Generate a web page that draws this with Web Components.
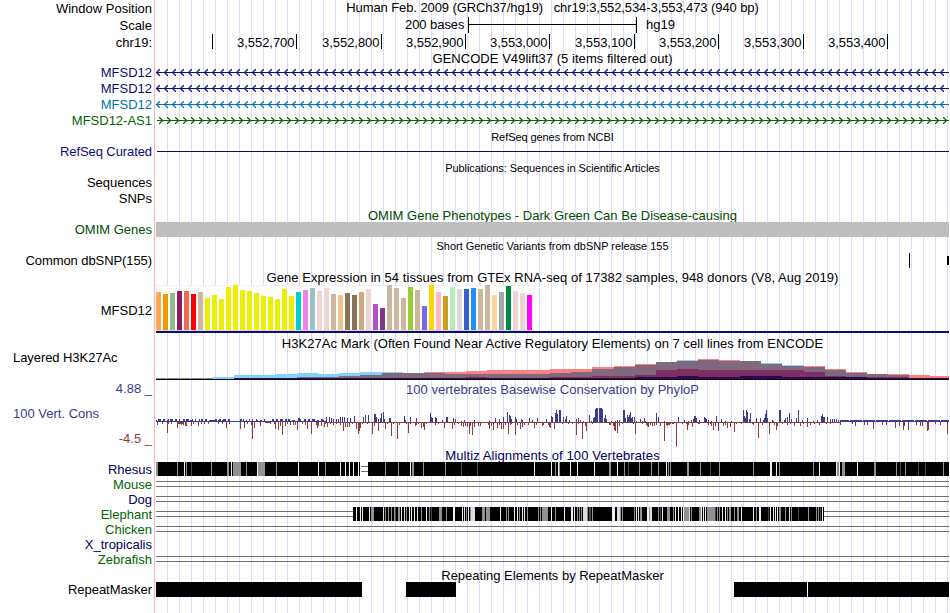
<!DOCTYPE html>
<html lang="en">
<head>
<meta charset="utf-8">
<title>hg19 chr19:3,552,534-3,553,473</title>
<style>
body {
    margin: 0;
    background: #fff;
    overflow: hidden;
}
</style>
</head>
<body>
<genome-browser>
    <track-row height="17" label="Window Position" base="13"><track-title base="12" fit="412.5">Human Feb. 2009 (GRCh37/hg19)&nbsp;&nbsp; chr19:3,552,534-3,553,473 (940 bp)</track-title></track-row>
    <track-row height="17" label="Scale" base="13"><scale-bar></scale-bar></track-row>
    <track-row height="17" label="chr19:" base="13"><position-ruler></position-ruler></track-row>

    <track-row height="13"><track-title base="12" fit="240">GENCODE V49lift37 (5 items filtered out)</track-title></track-row>
    <track-row height="16" label="MFSD12" base="13" color="#0c0c78"><gene-line color="#0c0c78" strand="-"></gene-line></track-row>
    <track-row height="16" label="MFSD12" base="13" color="#0c0c78"><gene-line color="#0c0c78" strand="-"></gene-line></track-row>
    <track-row height="16" label="MFSD12" base="13" color="#0072b2"><gene-line color="#0072b2" strand="-"></gene-line></track-row>
    <track-row height="16" label="MFSD12-AS1" base="13" color="#006400"><gene-line color="#006400" strand="+"></gene-line></track-row>

    <track-row height="16"><track-title small base="13" fit="122.5">RefSeq genes from NCBI</track-title></track-row>
    <track-row height="16" label="RefSeq Curated" fit="92" base="12" color="#0c0c78"><block-track blocks="157,7,792,1,#0c0c50"></block-track></track-row>

    <track-row height="15"><track-title small base="12" fit="214.5">Publications: Sequences in Scientific Articles</track-title></track-row>
    <track-row height="16" label="Sequences" base="12"></track-row>
    <track-row height="16" label="SNPs" base="12"></track-row>

    <track-row height="15"><track-title base="13" fit="369" color="#004b00">OMIM Gene Phenotypes - Dark Green Can Be Disease-causing</track-title></track-row>
    <track-row height="15" label="OMIM Genes" base="12" color="#004b00"><block-track blocks="156,0,793,15,#bebebe"></block-track></track-row>

    <track-row height="15"><track-title small base="13" fit="232">Short Genetic Variants from dbSNP release 155</track-title></track-row>
    <track-row height="17" label="Common dbSNP(155)" fit="126.5" base="13"><block-track blocks="909,1,1,15,#000 947,4,2,9,#000"></block-track></track-row>

    <track-row height="16"><track-title base="13" fit="572">Gene Expression in 54 tissues from GTEx RNA-seq of 17382 samples, 948 donors (V8, Aug 2019)</track-title></track-row>
    <track-row height="51" label="MFSD12" base="30"><tissue-chart></tissue-chart></track-row>

    <track-row height="15"><track-title base="12" fit="541.5">H3K27Ac Mark (Often Found Near Active Regulatory Elements) on 7 cell lines from ENCODE</track-title></track-row>
    <track-row height="30" label="Layered H3K27Ac" fit="104.5" base="11" side="left"><histone-chart></histone-chart></track-row>

    <conservation-row></conservation-row>

    <track-row height="13"><track-title base="11" fit="214.5" color="#00005a">Multiz Alignments of 100 Vertebrates</track-title></track-row>
    <track-row height="15" label="Rhesus" base="12" color="#00005a"><align-strip species="rhesus"></align-strip></track-row>
    <track-row height="15" label="Mouse" base="12" color="#006400"><align-strip species="none"></align-strip></track-row>
    <track-row height="15" label="Dog" base="12" color="#00005a"><align-strip species="none"></align-strip></track-row>
    <track-row height="15" label="Elephant" base="12" color="#006400"><align-strip species="elephant"></align-strip></track-row>
    <track-row height="15" label="Chicken" base="12" color="#006400"><align-strip species="none"></align-strip></track-row>
    <track-row height="15" label="X_tropicalis" base="12" color="#00005a"></track-row>
    <track-row height="15" label="Zebrafish" base="12" color="#006400"><align-strip species="none"></align-strip></track-row>

    <track-row height="15"><track-title base="13" fit="222.5">Repeating Elements by RepeatMasker</track-title></track-row>
    <track-row height="15" label="RepeatMasker" fit="84" base="12"><block-track blocks="156,0,206,15,#000 406,0,50,15,#000 734,0,73,15,#000 808,0,141,15,#000"></block-track></track-row>
</genome-browser>

<script>
// Tracks are drawn in image coordinates: the plot area runs from x = 155 to x = 949.
const LEFT = 155;
const WIDTH = 794;

const rect = (x, y, w, h, fill) => `<rect x="${x}" y="${y}" width="${w}" height="${h}" fill="${fill}"/>`;

const plot = (height, body) => `
<style>
:host { display: block; }
svg { display: block; overflow: visible; }
text { font: 13px "Liberation Sans", Arial, sans-serif; }
</style>
<svg width="${WIDTH}" height="${height}" viewBox="${LEFT} 0 ${WIDTH} ${height}" shape-rendering="crispEdges">${body}</svg>`;

// line-height that puts the first baseline "base" px below the top
const lineFor = (base, small) => base * 2 - (small ? 8 : 9);

// spread the letters of a span over "width" px
const fitText = (span, text, width) => {
    const gap = width - span.getBoundingClientRect().width;
    span.style.letterSpacing = gap / text.length + 'px';
};

class GenomeBrowser extends HTMLElement {
    constructor() {
        super();
        this.attachShadow({ mode: 'open' }).innerHTML = `
<style>
:host {
    display: flex;
    flex-direction: column;
    width: 949px;
    height: 613px;
    overflow: hidden;
    color: #000;
    font: 13px "Liberation Sans", Arial, sans-serif;
    background:
        linear-gradient(#ffb4b4, #ffb4b4) 154px 0 / 1px 100% no-repeat,
        repeating-linear-gradient(90deg, #dcdcf8 0 1px, transparent 1px 12px) 167px 0 / 782px 100% no-repeat;
}
</style>
<slot></slot>`;
    }
}

class TrackRow extends HTMLElement {
    constructor() {
        super();
        this.attachShadow({ mode: 'open' });
    }

    connectedCallback() {
        const left = this.getAttribute('side') === 'left';
        const label = this.getAttribute('label') || '';
        this.shadowRoot.innerHTML = `
<style>
:host {
    display: grid;
    grid-template-columns: 155px 794px;
    flex: none;
    height: ${this.getAttribute('height')}px;
}
.label {
    box-sizing: border-box;
    padding: 0 3px 0 13px;
    text-align: ${left ? 'left' : 'right'};
    white-space: nowrap;
    color: ${this.getAttribute('color') || '#000'};
    line-height: ${lineFor(+this.getAttribute('base') || 12)}px;
}
.plot { min-width: 0; }
</style>
<div class="label"><span>${label}</span></div>
<div class="plot"><slot></slot></div>`;
        if (this.hasAttribute('fit')) {
            fitText(this.shadowRoot.querySelector('span'), label, this.getAttribute('fit'));
        }
    }
}

class TrackTitle extends HTMLElement {
    constructor() {
        super();
        this.attachShadow({ mode: 'open' });
    }

    connectedCallback() {
        const small = this.hasAttribute('small');
        this.shadowRoot.innerHTML = `
<style>
:host {
    display: block;
    padding-left: 1px;
    text-align: center;
    white-space: nowrap;
    color: ${this.getAttribute('color') || '#000'};
    font-size: ${small ? 11 : 13}px;
    line-height: ${lineFor(+this.getAttribute('base'), small)}px;
}
</style>
<span><slot></slot></span>`;
        fitText(this.shadowRoot.querySelector('span'), this.textContent, this.getAttribute('fit'));
    }
}

class ScaleBar extends HTMLElement {
    constructor() {
        super();
        this.attachShadow({ mode: 'open' }).innerHTML = plot(17,
            rect(468, 0, 1, 16, '#000') + rect(636, 0, 1, 16, '#000') + rect(468, 7, 168, 1, '#000') +
            '<text x="405" y="12" textLength="59.5">200 bases</text><text x="646" y="12">hg19</text>');
    }
}

class PositionRuler extends HTMLElement {
    constructor() {
        super();
        const ticks = [212, 296, 381, 465, 549, 634, 718, 803, 887];
        const body = ticks.map((x, i) => {
            const pos = (3552600 + i * 100).toLocaleString('en-US');
            return rect(x, 0, 1, 15, '#000') +
                (i ? `<text x="${x - 59}" y="13" textLength="57.5">${pos}</text>` : '');
        });
        this.attachShadow({ mode: 'open' }).innerHTML = plot(17, body.join(''));
    }
}

class GeneLine extends HTMLElement {
    constructor() {
        super();
        this.attachShadow({ mode: 'open' });
    }

    connectedCallback() {
        const color = this.getAttribute('color');
        const minus = this.getAttribute('strand') === '-';
        let d = '';
        for (let x = minus ? 156.5 : 159.5; x < 946; x += 8) {
            d += minus ? `M${x + 3} 5.5l-3 3l3 3` : `M${x} 5.5l3 3l-3 3`;
        }
        this.shadowRoot.innerHTML = plot(16, rect(157, 8, 792, 1, color) +
            `<path d="${d}" fill="none" stroke="${color}" stroke-width="1.15" stroke-linecap="round" shape-rendering="auto"/>`);
    }
}

// blocks="x,y,w,h,fill ..."
class BlockTrack extends HTMLElement {
    constructor() {
        super();
        this.attachShadow({ mode: 'open' });
    }

    connectedCallback() {
        const blocks = this.getAttribute('blocks').split(' ').map(b => rect(...b.split(',')));
        this.shadowRoot.innerHTML = plot(15, blocks.join(''));
    }
}

const tissueHeights = [
    38, 36, 37, 39, 39, 36, 38, 32, 35, 31, 43, 45, 40, 39, 37, 34, 33, 31, 41, 34, 38, 40, 42, 39, 42, 36, 35,
    37, 35, 38, 41, 26, 22, 45, 42, 32, 43, 40, 24, 45, 38, 34, 43, 41, 41, 42, 41, 45, 35, 38, 44, 39, 37, 35,
];
const tissueColors = ('FFA54F EE9A00 8FBC8F 8B1C62 EE6A50 FF0000 CDB79E ' + 'EEEE00 '.repeat(13) +
    '00CDCD EE82EE 9AC0CD EED5D2 EED5D2 CDB79E EEC591 8B7355 8B7355 CDAA7D EED5D2 B452CD 7A378B CDB79E CDB79E ' +
    'CDB79E 9ACD32 CDB79E 7A67EE FFD700 FFB6C1 CD9B1D B4EEB4 D9D9D9 3A5FCD 1E90FF CDB79E CDB79E FFD39B A6A6A6 ' +
    '008B45 EED5D2 EED5D2 FF00FF').split(' ');

class TissueChart extends HTMLElement {
    constructor() {
        super();
        const bars = tissueHeights.map((h, i) => rect(156 + i * 7, 45 - h, 5, h, '#' + tissueColors[i]));
        this.attachShadow({ mode: 'open' }).innerHTML = plot(51,
            rect(156, 0, 378, 46, '#f0f0f0') + rect(157, 1, 376, 44, '#fff') + rect(156, 45, 377, 1, '#d8d8d8') +
            bars.join('') + rect(156, 46, 793, 2, '#0c0c78'));
    }
}

// Each layer is a list of steps: start x, top y. A layer ends at its last x.
const histoneLayers = [
    ['#7fd2ff', [213, 26, 234, 24, 276, 23, 297, 22, 318, 23, 339, 22, 360, 21, 403, 28, 677, 9, 698, 28, 761, 12, 782, 14, 804, 28]],
    ['#ff8080', [424, 21, 466, 20, 487, 19, 550, 18, 592, 16, 614, 15, 635, 13, 656, 11, 677, 10, 698, 8, 719, 9, 740, 10, 761, 13, 782, 15, 804, 15, 825, 18, 846, 21, 867, 23, 909, 24, 930, 25, 949]],
    ['#80697f', [297, 26, 339, 25, 360, 24, 382, 22, 445, 23, 550, 22, 571, 21, 592, 18, 614, 16, 635, 14, 656, 11, 677, 10, 698, 9, 719, 10, 761, 13, 782, 15, 804, 16, 825, 19, 846, 22, 867, 23, 888, 24, 909, 27, 949]],
    ['#7f2f64', [297, 27, 466, 26, 487, 27, 529, 27, 550, 26, 592, 25, 635, 24, 656, 19, 677, 18, 698, 19, 804, 21, 825, 25, 846, 26, 909, 27, 949]],
    ['#1c0a5c', [592, 27, 635, 26, 677, 25, 698, 26, 740, 25, 782, 26, 825, 26, 867, 27, 949]],
];

class HistoneChart extends HTMLElement {
    constructor() {
        super();
        let body = rect(156, 27, 57, 1, '#6f9a68');
        for (const [color, steps] of histoneLayers) {
            for (let i = 0; i + 2 < steps.length; i += 2) {
                body += rect(steps[i], steps[i + 1], steps[i + 2] - steps[i], 29 - steps[i + 1], color);
            }
        }
        body += rect(234, 27, 715, 1, '#30103c') + rect(156, 28, 793, 1, '#180018');
        this.attachShadow({ mode: 'open' }).innerHTML = plot(30, body);
    }
}

// PhyloP scores, "x:height", in px above and below the axis
const conserved = `156:2 158:3 159:3 160:3 163:3 164:3 167:2 168:3 170:3 171:3 172:3 175:3 176:3 179:3 183:3 184:3 186:3
187:3 188:3 190:2 191:2 192:3 195:3 199:3 201:3 202:3 205:3 206:3 209:2 210:2 211:2 212:2 213:2 214:2 215:3 216:3 218:2
219:3 220:3 222:2 223:3 224:3 225:3 228:3 229:3 231:1 240:3 241:3 243:3 246:2 249:3 252:3 256:3 257:2 260:2 261:2 264:3
272:3 273:3 276:3 277:3 280:3 281:3 282:3 285:3 286:3 288:3 289:3 292:2 293:2 294:2 298:4 299:4 300:3 304:3 305:3 308:3
309:3 312:3 313:3 314:3 317:2 318:2 321:3 322:3 323:2 326:5 329:5 331:4 333:3 336:3 338:3 340:5 342:5 344:5 347:4 350:4
354:6 363:5 365:7 368:7 374:8 375:8 376:5 378:3 380:4 381:9 383:10 384:3 389:4 390:4 404:6 405:2 410:5 416:4 430:9 431:5
432:4 435:5 436:4 442:2 446:5 447:5 453:4 455:3 461:1 464:2 474:2 489:1 495:4 499:3 503:5 507:10 509:7 510:6 511:3 515:5
516:3 521:3 522:2 529:4 532:2 537:4 546:3 551:6 552:5 555:9 556:12 557:8 559:12 560:12 563:5 565:3 566:6 569:2 576:3
578:4 580:2 583:1 589:7 591:1 593:4 594:5 595:13 596:14 597:14 599:14 600:14 601:14 602:13 604:4 605:7 606:3 611:1 615:1
617:2 619:2 623:12 624:12 625:4 627:7 628:5 629:7 630:10 631:4 632:5 634:5 636:1 640:3 642:1 644:4 645:1 656:9 658:5
664:1 678:5 684:2 688:1 691:2 693:3 694:6 695:6 696:4 699:2 704:5 705:4 706:3 708:2 711:1 716:6 721:3 725:1 731:1 743:12
744:6 745:4 746:12 747:10 749:3 750:9 756:4 760:4 763:2 764:4 765:8 766:12 767:4 772:2 773:1 779:12 780:12 784:2 785:4
787:5 789:9 791:3 796:4 798:12 802:2 807:4 813:1 817:2 821:6 822:8 823:5 824:5 827:5 830:3 832:3 834:3 836:3 838:2 840:1
841:1 842:1`;
const divergent = `157:3 162:2 167:11 168:2 171:2 177:6 178:2 179:2 180:2 181:3 182:2 183:3 185:4 186:4 191:4 193:2 198:4
201:2 204:2 208:2 218:2 222:2 226:6 229:2 240:7 244:6 247:2 251:3 252:17 254:6 260:4 265:1 266:1 267:1 268:1 269:1 270:2
274:2 275:7 278:8 280:4 282:13 285:4 287:2 290:3 293:3 295:3 297:8 302:2 305:3 307:7 311:12 316:3 317:6 318:4 321:4 324:5
325:2 327:5 330:2 333:3 336:2 340:3 343:9 345:5 347:5 349:5 352:2 356:7 358:12 359:9 360:6 362:2 367:2 372:12 374:4 378:9
385:7 387:2 391:14 393:2 397:17 399:3 406:2 408:11 410:2 415:4 416:3 418:2 421:6 423:5 424:8 426:2 435:3 438:2 444:6 452:7
454:3 458:2 461:4 463:5 465:4 467:5 469:12 470:4 472:13 474:5 478:4 480:4 488:3 489:7 491:4 493:8 497:6 499:3 501:7 503:7
505:3 508:12 510:3 511:2 515:13 517:3 520:7 522:5 524:3 528:3 534:6 536:3 542:4 543:3 548:3 549:5 550:6 554:7 562:2 568:2
572:2 576:13 578:2 582:17 585:4 586:9 592:2 609:3 610:3 613:4 614:8 615:9 617:11 619:4 622:2 633:2 635:12 642:2 646:3
647:4 648:5 650:3 652:4 654:4 656:3 660:4 664:19 666:3 667:4 668:3 669:3 670:2 672:2 673:2 676:23 682:2 686:2 687:8 688:3
692:5 698:2 699:2 708:3 710:2 711:4 713:8 715:4 718:9 723:4 725:3 727:6 730:5 734:10 736:2 741:2 752:2 753:3 758:16 762:3
769:12 774:3 776:8 777:4 782:2 787:3 790:2 794:4 800:4 803:2 807:5 810:3 814:2 819:3 826:2 830:2 840:3 852:2 855:4 864:3
867:3 873:7 882:3 886:3 895:6 899:4 903:8 904:4 908:8 916:3 920:4 922:4 927:9 928:8 935:2 940:3 947:12`;

class ConservationRow extends HTMLElement {
    constructor() {
        super();
        const up = '#3c3c8c';
        const down = '#8c3c3c';
        const axis = 41;
        let body = rect(156, axis - 1, 170, 1, up) + rect(326, axis, 514, 1, down);
        // low, nearly continuous scores at the right end
        for (let x = 840; x < 949; x++) {
            body += rect(x, axis - (x % 13 === 4 ? 1 : 2), 1, x % 13 === 4 ? 1 : 2, up);
        }
        for (const p of conserved.trim().split(/\s+/)) {
            const [x, h] = p.split(':');
            body += rect(x, axis - h, 1, h, up);
        }
        for (const p of divergent.trim().split(/\s+/)) {
            const [x, h] = p.split(':');
            body += rect(x, axis, 1, h, down);
        }
        body += rect(676, 64, 1, 2, '#ff00ff');
        this.attachShadow({ mode: 'open' }).innerHTML = `
<style>
:host {
    display: grid;
    grid-template-columns: 155px 794px;
    flex: none;
    height: 68px;
    color: ${up};
}
.labels {
    display: flex;
    flex-direction: column;
    box-sizing: border-box;
    padding: 0 3px 0 13px;
    line-height: 15px;
    text-align: right;
}
.name { margin: 10px 0; text-align: left; }
.min { color: ${down}; }
.plot { display: grid; }
.plot > * { grid-area: 1 / 1; }
svg { display: block; }
</style>
<div class="labels">
    <span>4.88 _</span>
    <span class="name">100 Vert. Cons</span>
    <span class="min">-4.5 _</span>
</div>
<div class="plot">
    <track-title base="13" fit="293" color="${up}">100 vertebrates Basewise Conservation by PhyloP</track-title>
    <svg width="${WIDTH}" height="68" viewBox="${LEFT} 0 ${WIDTH} 68" shape-rendering="crispEdges">${body}</svg>
</div>`;
    }
}

// Mismatch stripes, "x,width,shade": w and l light, g grey, d dark grey
const shades = { w: '#f0f0f0', l: '#dcdcdc', g: '#909090', d: '#484848' };
const strips = {
    rhesus: {
        spans: [[156, 204], [368, 581]],
        stripes: `156,2,g 177,1,g 184,1,w 186,1,g 191,1,d 211,1,g 227,2,g 231,1,w 233,8,g 246,1,g 257,1,w 258,7,g 276,1,g
298,1,w 318,1,w 325,1,g 340,1,w 345,1,w 349,1,w 353,1,w 358,1,w 385,1,g 398,1,g 410,1,w 412,2,g 423,1,g 445,1,g 461,1,d
477,1,d 534,1,w 551,1,w 555,1,g 558,1,w 559,1,g 570,1,w 577,1,w 594,1,w 609,2,g 617,1,w 624,1,g 628,1,d 639,1,g 651,1,g
658,1,g 666,1,w 668,1,g 670,1,g 687,2,g 700,1,g 710,1,d 719,1,g 753,1,g 770,2,w 776,1,w 779,1,g 813,1,g 819,1,w 836,1,w
837,2,g 839,1,w 842,3,g 857,1,w 874,2,g 896,1,g 900,1,d 905,1,g 918,1,d 925,1,d 943,1,g`,
        rails: [[361, 7]],
    },
    elephant: {
        spans: [[353, 471]],
        stripes: `356,1,w 360,1,w 362,1,w 369,1,w 371,3,g 383,1,l 385,1,g 388,1,g 391,1,g 394,1,g 395,1,d 398,2,g 401,1,w
404,1,l 406,1,g 409,1,w 411,1,w 414,1,w 417,1,l 421,1,g 426,1,w 429,1,g 431,1,d 439,3,g 446,1,g 453,2,w 462,1,w 464,1,l
466,1,g 468,1,w 470,1,g 471,4,l 482,3,g 486,1,g 487,3,g 500,1,w 506,1,g 508,1,g 514,1,w 517,1,w 519,1,g 522,1,w 524,1,w
527,1,g 538,1,g 540,1,g 542,6,g 551,1,w 555,1,g 564,1,w 571,2,w 574,1,w 577,1,g 579,1,g 581,1,g 583,2,l 585,2,l 587,1,g
589,2,d 592,1,g 612,2,w 614,1,w 617,3,l 620,1,g 622,1,g 634,1,g 636,1,w 638,1,l 640,1,g 641,1,g 647,2,w 649,1,g 650,2,l
658,1,g 660,1,d 662,1,w 667,3,g 673,1,g 675,1,w 678,1,w 681,1,w 683,1,w 684,5,g 689,1,l 691,1,g 699,2,g 701,1,w 703,1,w
705,1,w 707,8,g 715,1,d 717,1,g 719,1,g 722,1,w 725,1,w 727,1,g 729,2,g 734,1,g 737,2,g 741,1,w 753,1,w 756,1,g 759,2,w
768,1,d 770,1,w 773,1,w 775,1,w 777,1,w 779,2,g 785,1,g 789,1,l 791,1,g 798,1,d 808,1,g 816,1,g 818,1,g 820,1,d 822,1,w`,
        rails: [[156, 197], [824, 125]],
    },
    none: { spans: [], stripes: '', rails: [[156, 793]] },
};

class AlignStrip extends HTMLElement {
    constructor() {
        super();
        this.attachShadow({ mode: 'open' });
    }

    connectedCallback() {
        const { spans, stripes, rails } = strips[this.getAttribute('species')];
        let body = rails.map(([x, w]) => rect(x, 4, w, 1, '#707070') + rect(x, 9, w, 1, '#707070')).join('');
        body += spans.map(([x, w]) => rect(x, 0, w, 14, '#000')).join('');
        body += stripes.split(/\s+/).filter(Boolean).map(s => {
            const [x, w, shade] = s.split(',');
            return rect(x, 0, w, 14, shades[shade]);
        }).join('');
        this.shadowRoot.innerHTML = plot(15, body);
    }
}

customElements.define('genome-browser', GenomeBrowser);
customElements.define('track-row', TrackRow);
customElements.define('track-title', TrackTitle);
customElements.define('scale-bar', ScaleBar);
customElements.define('position-ruler', PositionRuler);
customElements.define('gene-line', GeneLine);
customElements.define('block-track', BlockTrack);
customElements.define('tissue-chart', TissueChart);
customElements.define('histone-chart', HistoneChart);
customElements.define('conservation-row', ConservationRow);
customElements.define('align-strip', AlignStrip);
</script>
</body>
</html>
